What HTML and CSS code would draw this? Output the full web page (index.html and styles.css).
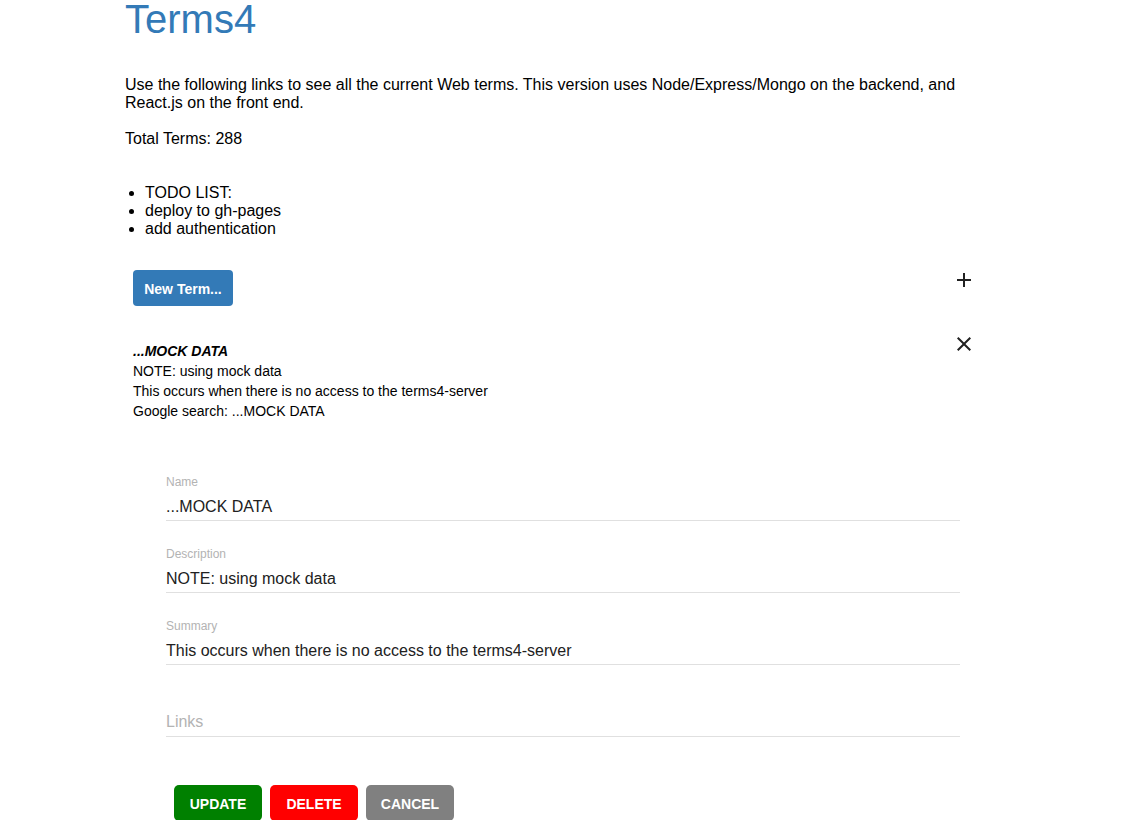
FILE: index.html
```html
<!DOCTYPE html>
<html lang="en">
<head>
<meta charset="utf-8">
<title>Terms4</title>
<link rel="stylesheet" href="styles.css">
</head>
<body>
<div class="page">
  <h1 class="title">Terms4</h1>
  <p class="intro">Use the following links to see all the current Web terms. This version uses Node/Express/Mongo on the backend, and React.js on the front end.</p>
  <p class="total">Total Terms: 288</p>
  <ul class="todo">
    <li>TODO LIST:</li>
    <li>deploy to gh-pages</li>
    <li>add authentication</li>
  </ul>

  <div class="toolbar">
    <button class="btn-new">New Term...</button>
    <span class="icon icon-add">
      <svg viewBox="0 0 24 24" width="24" height="24"><path d="M19 13h-6v6h-2v-6H5v-2h6V5h2v6h6v2z"/></svg>
    </span>
  </div>

  <div class="term">
    <div class="term-text">
      <div class="term-name">...MOCK DATA</div>
      <div>NOTE: using mock data</div>
      <div>This occurs when there is no access to the terms4-server</div>
      <div>Google search: ...MOCK DATA</div>
    </div>
    <span class="icon icon-close">
      <svg viewBox="0 0 24 24" width="24" height="24"><path d="M19 6.41L17.59 5 12 10.59 6.41 5 5 6.41 10.59 12 5 17.59 6.41 19 12 13.41 17.59 19 19 17.59 13.41 12z"/></svg>
    </span>
  </div>

  <form class="edit-form">
    <div class="field">
      <label class="field-label">Name</label>
      <div class="field-input">...MOCK DATA</div>
    </div>
    <div class="field">
      <label class="field-label">Description</label>
      <div class="field-input">NOTE: using mock data</div>
    </div>
    <div class="field">
      <label class="field-label">Summary</label>
      <div class="field-input">This occurs when there is no access to the terms4-server</div>
    </div>
    <div class="field">
      <label class="field-label"></label>
      <div class="field-input placeholder">Links</div>
    </div>
    <div class="actions">
      <button type="button" class="btn-action btn-update">UPDATE</button>
      <button type="button" class="btn-action btn-delete">DELETE</button>
      <button type="button" class="btn-action btn-cancel">CANCEL</button>
    </div>
  </form>
</div>
</body>
</html>
```

FILE: styles.css
```css
* { box-sizing: border-box; }

html, body {
  margin: 0;
  padding: 0;
  background: #fff;
}

body {
  font-family: "Liberation Sans", Arial, Helvetica, sans-serif;
  color: #000;
  font-size: 16px;
  line-height: 18px;
  overflow: hidden;
  height: 820px;
}

.page {
  margin-left: 125px;
  width: 854px;
}

.title {
  margin: 0;
  font-size: 40px;
  line-height: 39px;
  font-weight: 400;
  color: #337ab7;
}

.intro {
  margin: 37px 0 0;
}

.total {
  margin: 18px 0 0;
}

.todo {
  margin: 36px 0 0;
  padding-left: 20px;
  list-style: disc;
}

.toolbar {
  margin-top: 32px;
  display: flex;
  justify-content: space-between;
  align-items: flex-start;
  padding: 0 3px 0 8px;
  height: 36px;
}

.btn-new {
  width: 100px;
  height: 36px;
  border: none;
  border-radius: 4px;
  background: #337ab7;
  color: #fff;
  font-family: inherit;
  font-size: 14px;
  font-weight: 700;
  line-height: 20px;
  padding: 2px 0 0;
}

.icon {
  display: block;
  width: 24px;
  height: 24px;
}

.icon svg {
  display: block;
  fill: #212121;
}

.icon-add { margin-top: -2px; }

.term {
  margin-top: 26px;
  display: flex;
  justify-content: space-between;
  align-items: flex-start;
  padding: 0 3px 0 8px;
}

.term-text {
  margin-top: 9px;
  font-size: 14px;
  line-height: 20px;
}

.term-name {
  font-weight: 700;
  font-style: italic;
}

.edit-form {
  margin: 53px 19px 0 41px;
  display: flex;
  flex-direction: column;
  gap: 25px;
}

.field {
  display: flex;
  flex-direction: column;
}

.field-label {
  display: block;
  height: 16px;
  padding-top: 1px;
  font-size: 12px;
  line-height: 15px;
  color: #b3b3b3;
  margin-bottom: 5px;
}

.field-input {
  font-size: 16px;
  line-height: 24px;
  height: 26px;
  padding-bottom: 1px;
  color: #212121;
  border-bottom: 1px solid #e0e0e0;
  white-space: nowrap;
}

.field-input.placeholder {
  color: #b3b3b3;
  line-height: 22px;
  padding-bottom: 3px;
}

.actions {
  margin-top: 23px;
  padding-left: 8px;
  display: flex;
  gap: 8px;
}

.btn-action {
  width: 88px;
  height: 36px;
  border: none;
  border-radius: 5px;
  color: #fff;
  font-family: inherit;
  font-size: 14px;
  font-weight: 700;
  padding: 2px 0 0;
}

.btn-update { background: #008000; }
.btn-delete { background: #ff0000; }
.btn-cancel { background: #808080; }
```
